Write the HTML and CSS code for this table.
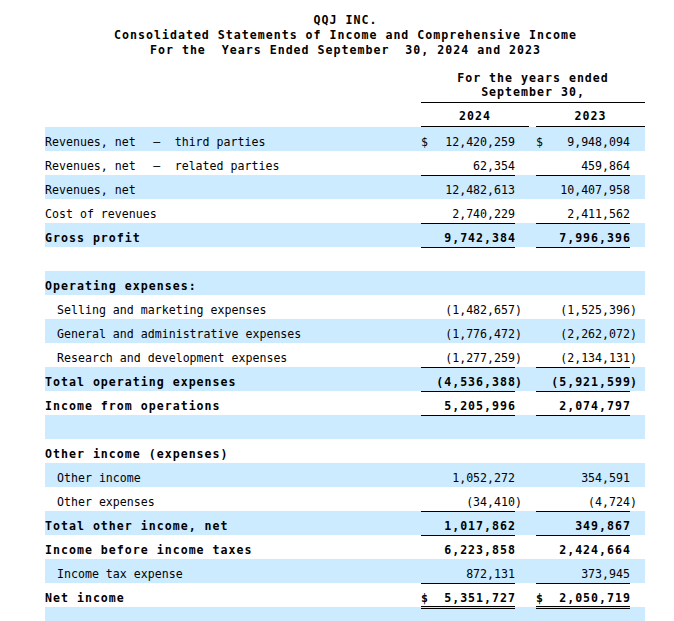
FILE: index.html
```html
<!DOCTYPE html>
<html lang="en">
<head>
<meta charset="utf-8">
<title>QQJ INC. Consolidated Statements of Income</title>
<link rel="stylesheet" href="styles.css">
</head>
<body>
<div class="page">
  <div class="title">
    <div class="tl">QQJ INC.</div>
    <div class="tl">Consolidated Statements of Income and Comprehensive Income</div>
    <div class="tl">For the  Years Ended September  30, 2024 and 2023</div>
  </div>

  <div class="head">
    <div class="head-period">For the years ended<br>September 30,</div>
  </div>
  <div class="years">
    <div></div>
    <div class="year">2024</div>
    <div></div>
    <div class="year">2023</div>
  </div>

  <div class="rows">
    <div class="row">
      <div class="label">Revenues, net  <span class="dash">—</span> third parties</div>
      <div class="num"><span class="cur">$</span><span class="val">12,420,259</span></div>
      <div class="par"></div>
      <div class="num"><span class="cur">$</span><span class="val">9,948,094</span></div>
      <div class="par"></div>
    </div>
    <div class="row">
      <div class="label">Revenues, net  <span class="dash">—</span> related parties</div>
      <div class="num u"><span class="val">62,354</span></div>
      <div class="par"></div>
      <div class="num u"><span class="val">459,864</span></div>
      <div class="par"></div>
    </div>
    <div class="row">
      <div class="label">Revenues, net</div>
      <div class="num"><span class="val">12,482,613</span></div>
      <div class="par"></div>
      <div class="num"><span class="val">10,407,958</span></div>
      <div class="par"></div>
    </div>
    <div class="row">
      <div class="label">Cost of revenues</div>
      <div class="num u"><span class="val">2,740,229</span></div>
      <div class="par"></div>
      <div class="num u"><span class="val">2,411,562</span></div>
      <div class="par"></div>
    </div>
    <div class="row b">
      <div class="label">Gross profit</div>
      <div class="num u"><span class="val">9,742,384</span></div>
      <div class="par"></div>
      <div class="num u"><span class="val">7,996,396</span></div>
      <div class="par"></div>
    </div>
    <div class="row">
      <div class="label"></div><div class="num"></div><div class="par"></div><div class="num"></div><div class="par"></div>
    </div>
    <div class="row b">
      <div class="label">Operating expenses:</div>
      <div class="num"></div><div class="par"></div><div class="num"></div><div class="par"></div>
    </div>
    <div class="row">
      <div class="label i">Selling and marketing expenses</div>
      <div class="num"><span class="val">(1,482,657</span></div>
      <div class="par">)</div>
      <div class="num"><span class="val">(1,525,396</span></div>
      <div class="par">)</div>
    </div>
    <div class="row">
      <div class="label i">General and administrative expenses</div>
      <div class="num"><span class="val">(1,776,472</span></div>
      <div class="par">)</div>
      <div class="num"><span class="val">(2,262,072</span></div>
      <div class="par">)</div>
    </div>
    <div class="row">
      <div class="label i">Research and development expenses</div>
      <div class="num u"><span class="val">(1,277,259</span></div>
      <div class="par">)</div>
      <div class="num u"><span class="val">(2,134,131</span></div>
      <div class="par">)</div>
    </div>
    <div class="row b">
      <div class="label">Total operating expenses</div>
      <div class="num u"><span class="val">(4,536,388</span></div>
      <div class="par">)</div>
      <div class="num u"><span class="val">(5,921,599</span></div>
      <div class="par">)</div>
    </div>
    <div class="row b">
      <div class="label">Income from operations</div>
      <div class="num u"><span class="val">5,205,996</span></div>
      <div class="par"></div>
      <div class="num u"><span class="val">2,074,797</span></div>
      <div class="par"></div>
    </div>
    <div class="row">
      <div class="label"></div><div class="num"></div><div class="par"></div><div class="num"></div><div class="par"></div>
    </div>
    <div class="row b">
      <div class="label">Other income (expenses)</div>
      <div class="num"></div><div class="par"></div><div class="num"></div><div class="par"></div>
    </div>
    <div class="row">
      <div class="label i">Other income</div>
      <div class="num"><span class="val">1,052,272</span></div>
      <div class="par"></div>
      <div class="num"><span class="val">354,591</span></div>
      <div class="par"></div>
    </div>
    <div class="row">
      <div class="label i">Other expenses</div>
      <div class="num u"><span class="val">(34,410</span></div>
      <div class="par">)</div>
      <div class="num u"><span class="val">(4,724</span></div>
      <div class="par">)</div>
    </div>
    <div class="row b">
      <div class="label">Total other income, net</div>
      <div class="num u"><span class="val">1,017,862</span></div>
      <div class="par"></div>
      <div class="num u"><span class="val">349,867</span></div>
      <div class="par"></div>
    </div>
    <div class="row b">
      <div class="label">Income before income taxes</div>
      <div class="num"><span class="val">6,223,858</span></div>
      <div class="par"></div>
      <div class="num"><span class="val">2,424,664</span></div>
      <div class="par"></div>
    </div>
    <div class="row">
      <div class="label i">Income tax expense</div>
      <div class="num u"><span class="val">872,131</span></div>
      <div class="par"></div>
      <div class="num u"><span class="val">373,945</span></div>
      <div class="par"></div>
    </div>
    <div class="row b">
      <div class="label">Net income</div>
      <div class="num uu"><span class="cur">$</span><span class="val">5,351,727</span></div>
      <div class="par"></div>
      <div class="num uu"><span class="cur">$</span><span class="val">2,050,719</span></div>
      <div class="par"></div>
    </div>
    <div class="row">
      <div class="label"></div><div class="num"></div><div class="par"></div><div class="num"></div><div class="par"></div>
    </div>
  </div>
</div>
</body>
</html>
```
FILE: styles.css
```css
* {
  box-sizing: border-box;
}

body {
  margin: 0;
  background: #ffffff;
  color: #000000;
  font-family: "DejaVu Sans Mono", "Liberation Mono", monospace;
  font-size: 11.6px;
}

.page {
  width: 674px;
  padding-left: 45px;
}

.title {
  width: 600px;
  margin-top: 13px;
  padding-left: 1px;
  text-align: center;
  font-weight: bold;
  letter-spacing: 1px;
  line-height: 15px;
}

.tl {
  white-space: pre;
}

.head {
  display: grid;
  grid-template-columns: 376px 224px;
  margin-top: 13px;
}

.head-period {
  grid-column: 2;
  text-align: center;
  font-weight: bold;
  letter-spacing: 1px;
  line-height: 14px;
  padding-bottom: 3px;
  border-bottom: 1px solid #000;
}

.years {
  display: grid;
  grid-template-columns: 376px 108px 7px 109px;
  height: 24px;
}

.year {
  text-align: center;
  font-weight: bold;
  letter-spacing: 1px;
  padding-top: 4px;
  line-height: 18px;
  border-bottom: 1px solid #000;
}

.rows {
  width: 600px;
}

.row {
  display: grid;
  grid-template-columns: 376px 94px 21px 94px 15px;
  height: 24px;
}

.row:nth-child(odd) {
  background: #ccebff;
}

.row > div {
  padding-top: 6px;
  line-height: 18px;
  white-space: pre;
}

.row.b {
  font-weight: bold;
  letter-spacing: 1px;
}

.label.i {
  padding-left: 12px;
}

.dash {
  display: inline-block;
  width: 14px;
  margin-right: 4px;
  text-align: center;
  letter-spacing: 0;
}

.num {
  display: flex;
}

.num .val {
  margin-left: auto;
}

.row.b .num .val {
  margin-right: -1px;
}

.num.u {
  border-bottom: 1px solid #000;
}

.num.uu {
  height: 26px;
  border-bottom: 3px double #000;
  position: relative;
  z-index: 1;
}
```
